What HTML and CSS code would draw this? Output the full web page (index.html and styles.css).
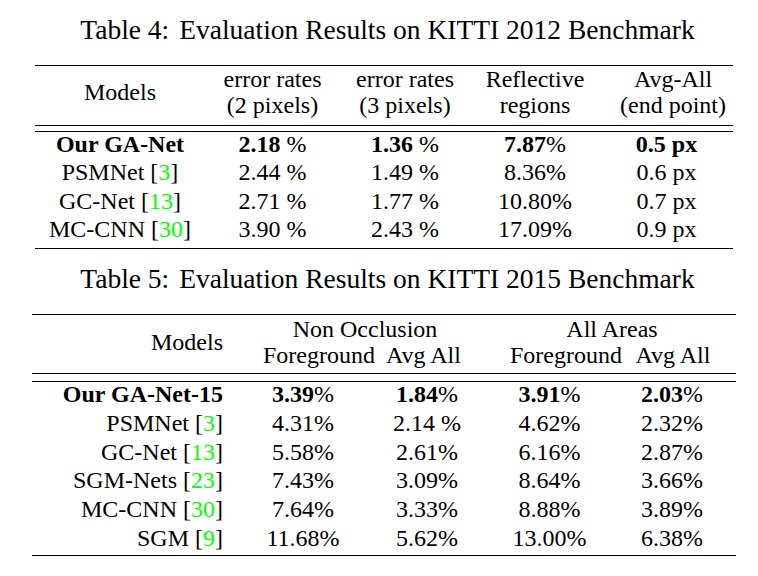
FILE: index.html
```html
<!DOCTYPE html>
<html lang="en">
<head>
<meta charset="utf-8">
<title>KITTI Evaluation Results</title>
<link rel="stylesheet" href="styles.css">
</head>
<body>
<div class="page">
  <div class="caption"><span class="cap-label">Table 4:</span> Evaluation Results on KITTI 2012 Benchmark</div>
  <div class="tbl t4">
    <div class="thead row">
      <div class="c models">Models</div>
      <div class="c">error rates<br>(2 pixels)</div>
      <div class="c">error rates<br>(3 pixels)</div>
      <div class="c">Reflective<br>regions</div>
      <div class="c last-head">Avg-All<br>(end point)</div>
    </div>
    <div class="tbody">
      <div class="row">
        <div class="c"><b>Our GA-Net</b></div>
        <div class="c"><b>2.18</b> %</div>
        <div class="c"><b>1.36</b> %</div>
        <div class="c"><b>7.87</b>%</div>
        <div class="c"><b>0.5 px</b></div>
      </div>
      <div class="row">
        <div class="c">PSMNet [<span class="ref">3</span>]</div>
        <div class="c">2.44 %</div>
        <div class="c">1.49 %</div>
        <div class="c">8.36%</div>
        <div class="c">0.6 px</div>
      </div>
      <div class="row">
        <div class="c">GC-Net [<span class="ref">13</span>]</div>
        <div class="c">2.71 %</div>
        <div class="c">1.77 %</div>
        <div class="c">10.80%</div>
        <div class="c">0.7 px</div>
      </div>
      <div class="row">
        <div class="c">MC-CNN [<span class="ref">30</span>]</div>
        <div class="c">3.90 %</div>
        <div class="c">2.43 %</div>
        <div class="c">17.09%</div>
        <div class="c">0.9 px</div>
      </div>
    </div>
  </div>

  <div class="caption"><span class="cap-label">Table 5:</span> Evaluation Results on KITTI 2015 Benchmark</div>
  <div class="tbl t5">
    <div class="thead row">
      <div class="c models">Models</div>
      <div class="c group-noc">Non Occlusion</div>
      <div class="c group-all">All Areas</div>
      <div class="c fg-noc">Foreground</div>
      <div class="c avg-noc">Avg All</div>
      <div class="c fg-all">Foreground</div>
      <div class="c avg-all">Avg All</div>
    </div>
    <div class="tbody">
      <div class="row">
        <div class="c name"><b>Our GA-Net-15</b></div>
        <div class="c"><b>3.39</b>%</div>
        <div class="c"><b>1.84</b>%</div>
        <div class="c"><b>3.91</b>%</div>
        <div class="c last"><b>2.03</b>%</div>
      </div>
      <div class="row">
        <div class="c name">PSMNet [<span class="ref">3</span>]</div>
        <div class="c">4.31%</div>
        <div class="c">2.14 %</div>
        <div class="c">4.62%</div>
        <div class="c last">2.32%</div>
      </div>
      <div class="row">
        <div class="c name">GC-Net [<span class="ref">13</span>]</div>
        <div class="c">5.58%</div>
        <div class="c">2.61%</div>
        <div class="c">6.16%</div>
        <div class="c last">2.87%</div>
      </div>
      <div class="row">
        <div class="c name">SGM-Nets [<span class="ref">23</span>]</div>
        <div class="c">7.43%</div>
        <div class="c">3.09%</div>
        <div class="c">8.64%</div>
        <div class="c last">3.66%</div>
      </div>
      <div class="row">
        <div class="c name">MC-CNN [<span class="ref">30</span>]</div>
        <div class="c">7.64%</div>
        <div class="c">3.33%</div>
        <div class="c">8.88%</div>
        <div class="c last">3.89%</div>
      </div>
      <div class="row">
        <div class="c name">SGM [<span class="ref">9</span>]</div>
        <div class="c">11.68%</div>
        <div class="c">5.62%</div>
        <div class="c">13.00%</div>
        <div class="c last">6.38%</div>
      </div>
    </div>
  </div>
</div>
</body>
</html>
```

FILE: styles.css
```css
html, body {
  margin: 0;
  padding: 0;
  background: #ffffff;
}

body {
  color: #000000;
  font-family: "Liberation Serif", "Times New Roman", Times, serif;
  font-size: 24px;
}

.page {
  width: 704px;
  margin-left: 32px;
}

.caption {
  font-size: 27.5px;
  line-height: 40px;
  text-align: center;
  padding: 10px 0 0 7px;
  margin-bottom: 15px;
  white-space: nowrap;
}

.cap-label {
  margin-right: 3px;
}

.ref {
  color: #00ff00;
}

b {
  font-weight: bold;
}

.c {
  text-align: center;
  white-space: nowrap;
}

.row {
  display: grid;
}

/* ---------- Table 4 ---------- */
.t4 {
  margin: 0 3px;
}

.t4 .row {
  grid-template-columns: 170px 135px 130px 130px 133px;
}

.t4 .thead {
  border-top: 1px solid #000;
  border-bottom: 1px solid #000;
  padding-bottom: 7px;
  line-height: 26px;
}

.t4 .thead .models {
  align-self: center;
}

.t4 .thead .last-head {
  padding-left: 13px;
}

.t4 .tbody {
  margin-top: 5px;
  border-top: 1px solid #000;
  border-bottom: 1px solid #000;
  padding-bottom: 3px;
}

.t4 .tbody .row {
  height: 28.33px;
  line-height: 24px;
}

/* ---------- Table 5 ---------- */
.t5 .row {
  grid-template-columns: 203px 136px 112px 133px 120px;
}

.t5 .thead {
  grid-template-rows: 26px 26px;
  border-top: 1px solid #000;
  border-bottom: 1px solid #000;
  padding: 1px 0 5px;
  line-height: 26px;
}

.t5 .thead .models {
  grid-row: 1 / span 2;
  grid-column: 1;
  align-self: center;
  text-align: right;
  padding-right: 12px;
}

.t5 .group-noc {
  grid-row: 1;
  grid-column: 2 / span 2;
  padding-left: 12px;
}

.t5 .group-all {
  grid-row: 1;
  grid-column: 4 / span 2;
  padding-left: 5px;
}

.t5 .fg-noc {
  grid-row: 2;
  grid-column: 2;
  padding-left: 28px;
}

.t5 .avg-noc {
  grid-row: 2;
  grid-column: 3;
  padding-right: 7px;
}

.t5 .fg-all {
  grid-row: 2;
  grid-column: 4;
  padding-left: 27px;
}

.t5 .avg-all {
  grid-row: 2;
  grid-column: 5;
  padding-right: 6px;
}

.t5 .tbody {
  margin-top: 7px;
  border-top: 1px solid #000;
  border-bottom: 1px solid #000;
  padding-bottom: 1px;
}

.t5 .tbody .row {
  height: 28.66px;
  line-height: 24px;
}

.t5 .name {
  text-align: right;
  padding-right: 12px;
}

.t5 .last {
  padding-right: 8px;
}
```
